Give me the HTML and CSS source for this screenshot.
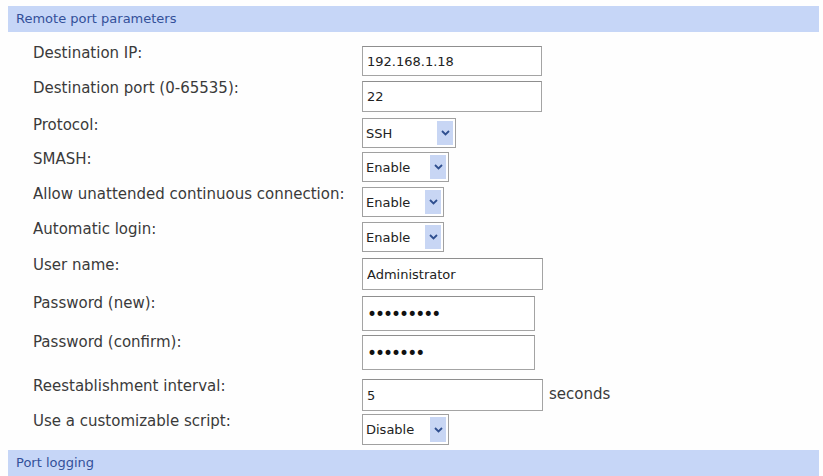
FILE: index.html
```html
<!DOCTYPE html>
<html lang="en">
<head>
  <meta charset="UTF-8" />
  <title>Remote port parameters</title>
  <link rel="stylesheet" href="styles.css">
</head>
<body>
  <div class="section-head">Remote port parameters</div>

  <div class="form">
    <div class="row">
      <label for="destIp">Destination IP:</label>
      <input type="text" class="text" id="destIp" value="192.168.1.18">
    </div>
    <div class="row gap-6">
      <label for="destPort">Destination port (0-65535):</label>
      <input type="text" class="text tall" id="destPort" value="22">
    </div>
    <div class="row gap-4">
      <label>Protocol:</label>
      <span class="select w-94"><select><option>SSH</option><option>Telnet</option></select><span class="arrow"><svg width="9" height="6" viewBox="0 0 9 6"><path d="M1 1 L4.5 4.5 L8 1" fill="none" stroke="#2f4f8f" stroke-width="1.8"/></svg></span></span>
    </div>
    <div class="row">
      <label>SMASH:</label>
      <span class="select w-87"><select><option>Enable</option><option>Disable</option></select><span class="arrow"><svg width="9" height="6" viewBox="0 0 9 6"><path d="M1 1 L4.5 4.5 L8 1" fill="none" stroke="#2f4f8f" stroke-width="1.8"/></svg></span></span>
    </div>
    <div class="row">
      <label>Allow unattended continuous connection:</label>
      <span class="select w-82"><select><option>Enable</option><option>Disable</option></select><span class="arrow"><svg width="9" height="6" viewBox="0 0 9 6"><path d="M1 1 L4.5 4.5 L8 1" fill="none" stroke="#2f4f8f" stroke-width="1.8"/></svg></span></span>
    </div>
    <div class="row gap-6">
      <label>Automatic login:</label>
      <span class="select w-82"><select><option>Enable</option><option>Disable</option></select><span class="arrow"><svg width="9" height="6" viewBox="0 0 9 6"><path d="M1 1 L4.5 4.5 L8 1" fill="none" stroke="#2f4f8f" stroke-width="1.8"/></svg></span></span>
    </div>
    <div class="row gap-6">
      <label for="userName">User name:</label>
      <input type="text" class="text user" id="userName" value="Administrator">
    </div>
    <div class="row gap-4">
      <label for="pwNew">Password (new):</label>
      <input type="password" class="text pw" id="pwNew" value="xxxxxxxxx">
    </div>
    <div class="row gap-9">
      <label for="pwConfirm">Password (confirm):</label>
      <input type="password" class="text pw" id="pwConfirm" value="xxxxxxx">
    </div>
    <div class="row gap-3">
      <label for="interval">Reestablishment interval:</label>
      <input type="text" class="text user" id="interval" value="5">
      <span class="unit">seconds</span>
    </div>
    <div class="row last">
      <label>Use a customizable script:</label>
      <span class="select w-87 tall"><select><option>Disable</option><option>Enable</option></select><span class="arrow"><svg width="9" height="6" viewBox="0 0 9 6"><path d="M1 1 L4.5 4.5 L8 1" fill="none" stroke="#2f4f8f" stroke-width="1.8"/></svg></span></span>
    </div>
  </div>

  <div class="section-head">Port logging</div>
</body>
</html>
```

FILE: styles.css
```css
body {
  margin: 0;
  padding-top: 6px;
  background: #fefefe;
  color: #3a3a3a;
  font-family: "DejaVu Sans", Verdana, sans-serif;
  font-size: 13px;
}

.section-head {
  margin: 0 4px 0 8px;
  height: 26px;
  line-height: 26px;
  padding-left: 8px;
  background: #c6d6f7;
  color: #33509a;
  font-size: 13px;
}

.form {
  padding: 14px 0 5px 33px;
}

/* one label + control per line, spacing tuned per row */
.row {
  display: flex;
  align-items: flex-start;
  margin-bottom: 5px;
}
.row.gap-3 { margin-bottom: 3px; }
.row.gap-4 { margin-bottom: 4px; }
.row.gap-6 { margin-bottom: 6px; }
.row.gap-9 { margin-bottom: 9px; }
.row.last { margin-bottom: 0; }

.row label {
  flex: 0 0 329px;
  font-size: 15px;
  line-height: 18px;
  margin-top: -2px;
}

.text {
  box-sizing: border-box;
  width: 180px;
  height: 30px;
  margin: 0;
  padding: 0 4px;
  border: 1px solid #a4a4a4;
  border-top-color: #8e8e8e;
  background: #fff;
  color: #222;
  font-family: inherit;
  font-size: 13px;
  outline: none;
}
.text.tall { height: 31px; }
.text.user { width: 181px; height: 32px; }
.text.pw {
  width: 173px;
  height: 35px;
  font-size: 17px;
  letter-spacing: -2px;
  color: #111;
}

.unit {
  margin-left: 6px;
  font-size: 15px;
  line-height: 30px;
}

.select {
  display: inline-flex;
  box-sizing: border-box;
  height: 30px;
  border: 1px solid #a0a0a0;
  background: #fff;
}
.select.tall { height: 31px; }
.select select {
  appearance: none;
  -webkit-appearance: none;
  flex: 1;
  min-width: 0;
  margin: 0;
  padding: 0 3px;
  border: none;
  background: transparent;
  color: #222;
  font-family: inherit;
  font-size: 13px;
  outline: none;
}
.select .arrow {
  flex: 0 0 16px;
  margin: 2px 2px 2px 0;
  background: #c8d6f4;
  display: flex;
  align-items: center;
  justify-content: center;
}
.w-94 { width: 94px; }
.w-87 { width: 87px; }
.w-82 { width: 82px; }
```
